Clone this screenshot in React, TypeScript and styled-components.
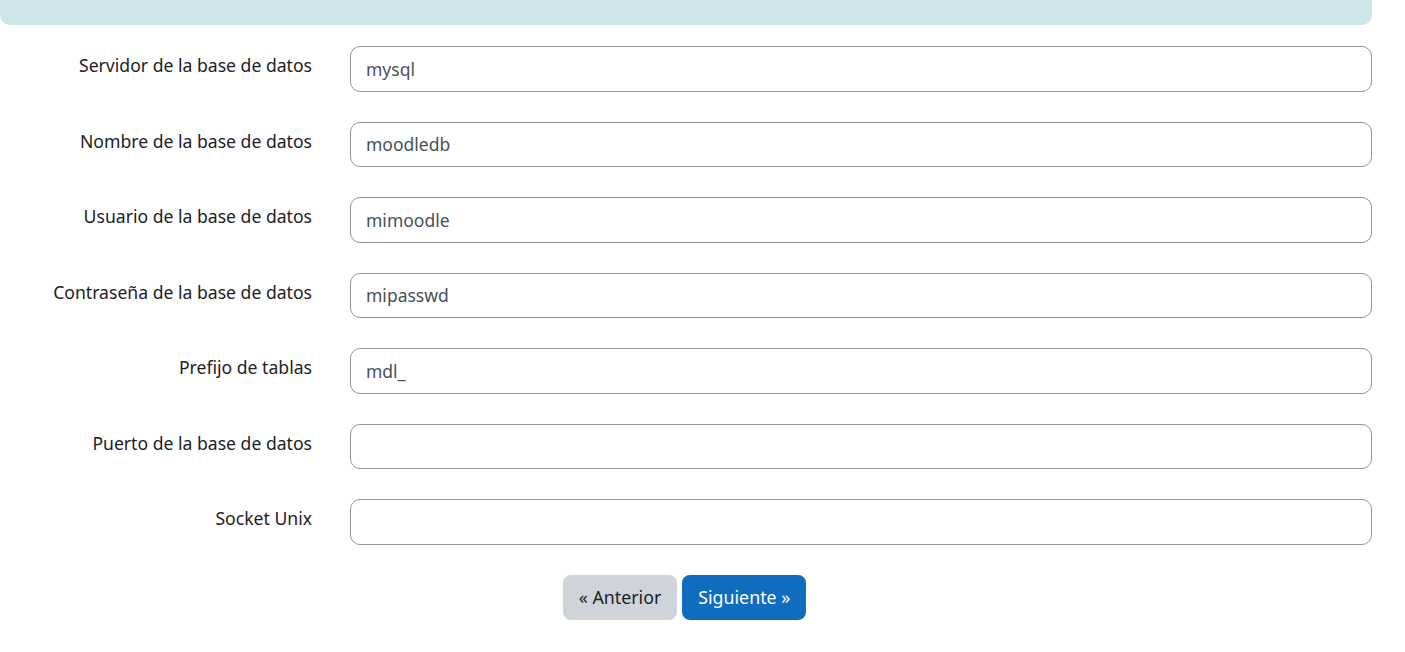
import styled, { createGlobalStyle } from "styled-components";

const GlobalStyle = createGlobalStyle`
  html, body {
    margin: 0;
    padding: 0;
    background: #ffffff;
  }
  body {
    font-family: "Noto Sans", "Open Sans", sans-serif;
    font-size: 18px;
    color: #1d2125;
  }
`;

const Page = styled.div`
  width: 1372px;
`;

const InfoBar = styled.div`
  height: 25px;
  background-color: #cee6ea;
  border-radius: 0 0 10px 10px;
  margin-bottom: 21px;
`;

const Form = styled.form`
  display: flex;
  flex-direction: column;
  gap: 30px;
`;

const FieldRow = styled.div`
  display: grid;
  grid-template-columns: 312px 1fr;
  column-gap: 38px;
  align-items: start;
`;

const Label = styled.label`
  text-align: right;
  font-size: 17.6px;
  line-height: 26px;
  padding-top: 6px;
  white-space: nowrap;
`;

const TextInput = styled.input`
  box-sizing: border-box;
  height: 45.5px;
  width: 100%;
  padding: 0 15px;
  border: 1px solid #8f959e;
  border-radius: 10px;
  font-family: inherit;
  font-size: 17.5px;
  color: #495057;
  background: #ffffff;
  outline: none;
`;

const ButtonBar = styled.div`
  display: flex;
  justify-content: center;
  gap: 5px;
  padding-right: 3px;
`;

const Button = styled.button<{ $primary?: boolean }>`
  box-sizing: border-box;
  height: 45px;
  padding: 0 16px;
  border: none;
  border-radius: 8px;
  font-family: inherit;
  font-size: 17.8px;
  color: ${(p) => (p.$primary ? "#ffffff" : "#1d2125")};
  background-color: ${(p) => (p.$primary ? "#0f6cbf" : "#ced4da")};
  cursor: pointer;
`;

const fields = [
  { label: "Servidor de la base de datos", value: "mysql" },
  { label: "Nombre de la base de datos", value: "moodledb" },
  { label: "Usuario de la base de datos", value: "mimoodle" },
  { label: "Contraseña de la base de datos", value: "mipasswd" },
  { label: "Prefijo de tablas", value: "mdl_" },
  { label: "Puerto de la base de datos", value: "" },
  { label: "Socket Unix", value: "" },
];

export default function App() {
  return (
    <Page>
      <GlobalStyle />
      <InfoBar />
      <Form onSubmit={(e) => e.preventDefault()}>
        {fields.map((f, i) => (
          <FieldRow key={i}>
            <Label htmlFor={`f${i}`}>{f.label}</Label>
            <TextInput id={`f${i}`} type="text" defaultValue={f.value} />
          </FieldRow>
        ))}
        <ButtonBar>
          <Button type="button">« Anterior</Button>
          <Button type="submit" $primary>
            Siguiente »
          </Button>
        </ButtonBar>
      </Form>
    </Page>
  );
}
